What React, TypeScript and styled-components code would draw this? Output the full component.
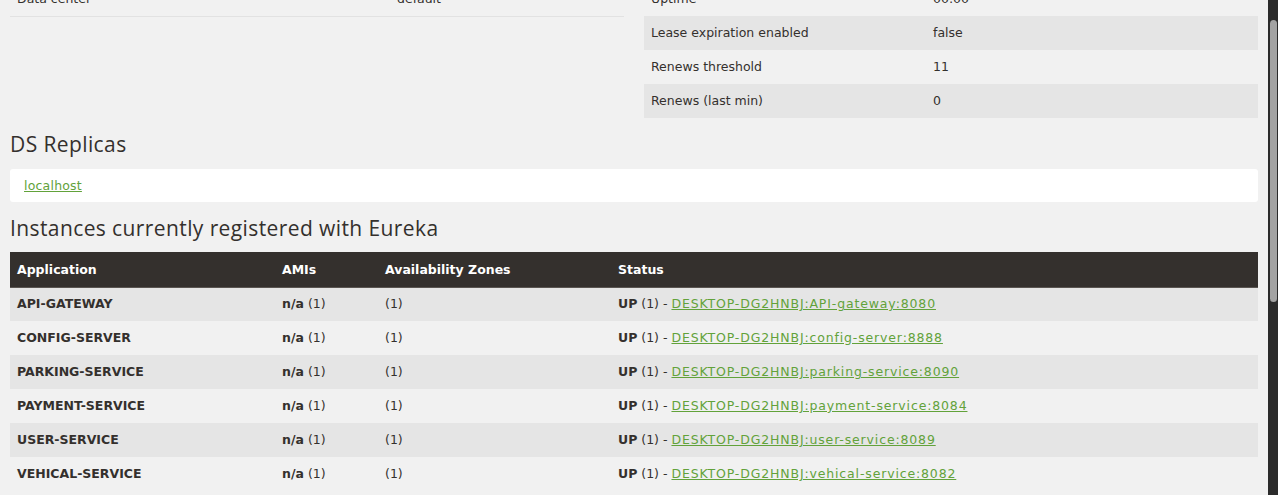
import React, { useLayoutEffect, useRef } from "react";
import styled, { createGlobalStyle } from "styled-components";

//data
const leftStatus = [
  ["Environment", "test"],
  ["Data center", "default"],
];

const rightStatus = [
  ["Current time", "2023-05-14T12:40:11 +0530"],
  ["Uptime", "00:00"],
  ["Lease expiration enabled", "false"],
  ["Renews threshold", "11"],
  ["Renews (last min)", "0"],
];

const instances = [
  { name: "API-GATEWAY", id: "DESKTOP-DG2HNBJ:API-gateway:8080" },
  { name: "CONFIG-SERVER", id: "DESKTOP-DG2HNBJ:config-server:8888" },
  { name: "PARKING-SERVICE", id: "DESKTOP-DG2HNBJ:parking-service:8090" },
  { name: "PAYMENT-SERVICE", id: "DESKTOP-DG2HNBJ:payment-service:8084" },
  { name: "USER-SERVICE", id: "DESKTOP-DG2HNBJ:user-service:8089" },
  { name: "VEHICAL-SERVICE", id: "DESKTOP-DG2HNBJ:vehical-service:8082" },
];

const generalInfo = [
  ["total-avail-memory", "242mb"],
  ["num-of-cpus", "8"],
  ["current-memory-usage", "92mb (38%)"],
  ["server-uptime", "00:00"],
  ["registered-replicas", "http://localhost:8761/eureka/"],
  ["unavailable-replicas", "http://localhost:8761/eureka/,"],
  ["available-replicas", ""],
];

const GlobalStyle = createGlobalStyle`
  html, body {
    margin: 0;
    padding: 0;
    background: #f1f1f1;
    overflow: hidden;
  }
  body {
    font-family: "DejaVu Sans", "Open Sans", sans-serif;
    font-size: 12.5px;
    color: #34302d;
  }
`;

const KeyValueTable: React.FC<{ rows: string[][]; keyWidth: number; bordered?: boolean }> = ({
  rows,
  keyWidth,
  bordered,
}) => (
  <Table>
    <colgroup>
      <Col $w={keyWidth} />
      <Col />
    </colgroup>
    <tbody>
      {rows.map(([k, v], i) => (
        <Row key={k} $striped={i % 2 === 0} $bordered={bordered}>
          <Cell>{k}</Cell>
          <Cell>{v}</Cell>
        </Row>
      ))}
    </tbody>
  </Table>
);

export default function App() {
  const viewRef = useRef<HTMLDivElement>(null);

  // the page is shown scrolled a little past the top of the status tables
  useLayoutEffect(() => {
    if (viewRef.current) viewRef.current.scrollTop = 52;
  }, []);

  return (
    <>
      <GlobalStyle />
      <Frame>
        <Viewport ref={viewRef}>
          <Container>
            <StatusGrid>
              <KeyValueTable rows={leftStatus} keyWidth={380} bordered />
              <KeyValueTable rows={rightStatus} keyWidth={282} />
            </StatusGrid>

            <Heading>DS Replicas</Heading>
            <ReplicaBox>
              <Link href="#">localhost</Link>
            </ReplicaBox>

            <Heading>Instances currently registered with Eureka</Heading>
            <Table>
              <colgroup>
                <Col $w={265} />
                <Col $w={103} />
                <Col $w={233} />
                <Col />
              </colgroup>
              <thead>
                <tr>
                  <HeadCell>Application</HeadCell>
                  <HeadCell>AMIs</HeadCell>
                  <HeadCell>Availability Zones</HeadCell>
                  <HeadCell>Status</HeadCell>
                </tr>
              </thead>
              <tbody>
                {instances.map((app, i) => (
                  <Row key={app.name} $striped={i % 2 === 0}>
                    <Cell>
                      <b>{app.name}</b>
                    </Cell>
                    <Cell>
                      <b>n/a</b> (1)
                    </Cell>
                    <Cell>(1)</Cell>
                    <Cell>
                      <b>UP</b> (1) - <Link href="#" $wide>{app.id}</Link>
                    </Cell>
                  </Row>
                ))}
              </tbody>
            </Table>

            <Heading>General Info</Heading>
            <KeyValueTable rows={generalInfo} keyWidth={380} />
          </Container>
        </Viewport>
        <ScrollTrack>
          <ScrollThumb />
        </ScrollTrack>
      </Frame>
    </>
  );
}

const Frame = styled.div`
  display: flex;
  height: 100vh;
`;

const Viewport = styled.div`
  flex: 1;
  min-width: 0;
  overflow: hidden;
`;

const ScrollTrack = styled.div`
  width: 10px;
  flex-shrink: 0;
  box-sizing: border-box;
  padding: 20px 1px 0 2px;
  background: #2b2b2b;
`;

const ScrollThumb = styled.div`
  height: 282px;
  border-radius: 4px;
  background: #a3a3a3;
`;

const Container = styled.div`
  padding: 0 10px 10px;
  display: flex;
  flex-direction: column;
`;

const StatusGrid = styled.div`
  display: grid;
  grid-template-columns: 1fr 1fr;
  column-gap: 20px;
  align-items: start;
`;

const Table = styled.table`
  width: 100%;
  border-collapse: collapse;
  table-layout: fixed;
`;

const Col = styled.col<{ $w?: number }>`
  width: ${(p) => (p.$w ? `${p.$w}px` : "auto")};
`;

const Row = styled.tr<{ $striped?: boolean; $bordered?: boolean }>`
  background: ${(p) => (p.$striped ? "#e5e5e5" : "transparent")};
  border-bottom: ${(p) => (p.$bordered ? "1px solid #e2e2e2" : "none")};
`;

const Cell = styled.td`
  height: 34px;
  box-sizing: border-box;
  padding: 0 7px;
  line-height: 18px;
  font-size: 12.5px;
  color: #34302d;
  white-space: nowrap;
  vertical-align: middle;

  b {
    font-weight: 700;
  }
`;

const HeadCell = styled.th`
  height: 35px;
  box-sizing: border-box;
  padding: 0 7px;
  background: #34302d;
  color: #ffffff;
  font-size: 12.5px;
  font-weight: 700;
  text-align: left;
  vertical-align: middle;
  border-bottom: 1px solid #5a5551;
`;

const Heading = styled.h2`
  margin: 14px 0 12px;
  font-family: "Open Sans", "Noto Sans", sans-serif;
  font-size: 21px;
  line-height: 24px;
  font-weight: 500;
  color: #34302d;
  letter-spacing: 0.4px;
`;

const ReplicaBox = styled.div`
  height: 33px;
  margin-top: 1px;
  box-sizing: border-box;
  padding: 0 14px;
  display: flex;
  align-items: center;
  background: #ffffff;
  border-radius: 3px;
`;

const Link = styled.a<{ $wide?: boolean }>`
  color: #62a23a;
  text-decoration: underline;
  font-size: 12.5px;
  letter-spacing: ${(p) => (p.$wide ? "0.85px" : "0.2px")};
`;
